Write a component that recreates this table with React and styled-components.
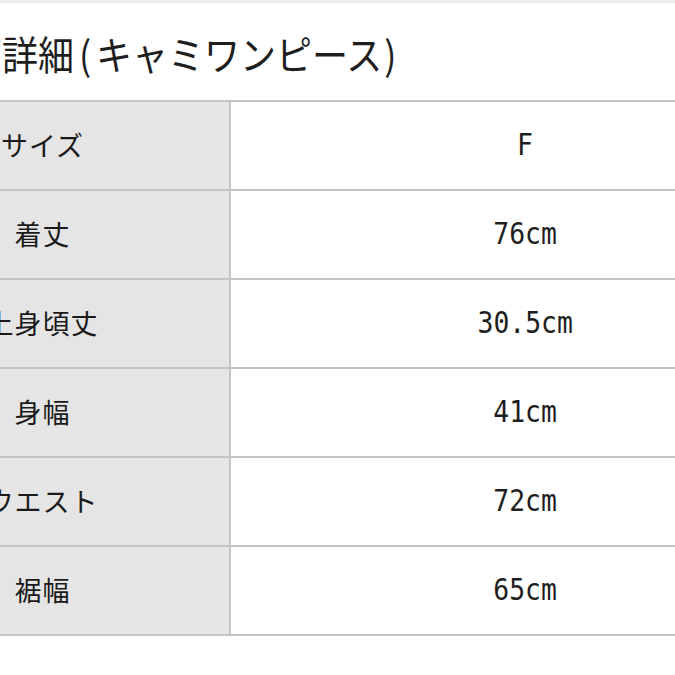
import React from 'react';
import styled, { createGlobalStyle } from 'styled-components';

const GlobalStyle = createGlobalStyle`
  html, body {
    margin: 0;
    padding: 0;
    background: #fff;
  }
  body {
    width: 675px;
    height: 675px;
    overflow: hidden;
    font-family: 'Noto Sans CJK JP', 'Noto Sans', sans-serif;
    color: #1e1e1e;
  }
`;

const Page = styled.div`
  border-top: 3px solid #ececec;
  width: 675px;
  overflow: hidden;
`;

const Sheet = styled.div`
  margin-left: -144px;
  width: 963px;
`;

const Title = styled.h2`
  margin: 0;
  height: 97px;
  display: flex;
  align-items: center;
  padding-left: 39px;
  font-size: 36px;
  font-weight: 400;
  white-space: nowrap;
`;

const TitlePart = styled.span`
  display: inline-block;
  transform: scaleY(1.1);
  margin-left: ${(p) => p.$ml || 0}px;
  margin-right: ${(p) => p.$mr || 0}px;
`;

const Table = styled.div`
  border-top: 2px solid #c4c4c4;
`;

const Row = styled.div`
  display: grid;
  grid-template-columns: 373px 2px 1fr;
  height: 87px;
  border-bottom: 2px solid #c4c4c4;
`;

const Label = styled.div`
  background: #e5e5e5;
  display: flex;
  align-items: center;
  justify-content: center;
  font-size: 27px;
  letter-spacing: 1px;
  color: #1a1a1a;
  padding-bottom: 2px;
  white-space: nowrap;
`;

const Divider = styled.div`
  background: #c4c4c4;
`;

const Value = styled.div`
  display: flex;
  align-items: center;
  justify-content: center;
  padding-bottom: 2px;

  & span {
    display: inline-block;
    font-family: 'DejaVu Sans Mono', 'Liberation Mono', monospace;
    font-size: 30px;
    color: #1e1e1e;
    transform: scaleX(0.88);
  }
`;

const rows = [
  ['サイズ', 'F'],
  ['着丈', '76cm'],
  ['上身頃丈', '30.5cm'],
  ['身幅', '41cm'],
  ['ウエスト', '72cm'],
  ['裾幅', '65cm'],
];

const App = () => (
  <Page>
    <GlobalStyle />
    <Sheet>
      <Title>
        <TitlePart>サイズ詳細</TitlePart>
        <TitlePart $ml={5} $mr={5}>(</TitlePart>
        <TitlePart>キャミワンピース</TitlePart>
        <TitlePart $ml={2}>)</TitlePart>
      </Title>
      <Table>
        {rows.map(([label, value]) => (
          <Row key={label}>
            <Label>{label}</Label>
            <Divider />
            <Value>
              <span>{value}</span>
            </Value>
          </Row>
        ))}
      </Table>
    </Sheet>
  </Page>
);

export default App;
